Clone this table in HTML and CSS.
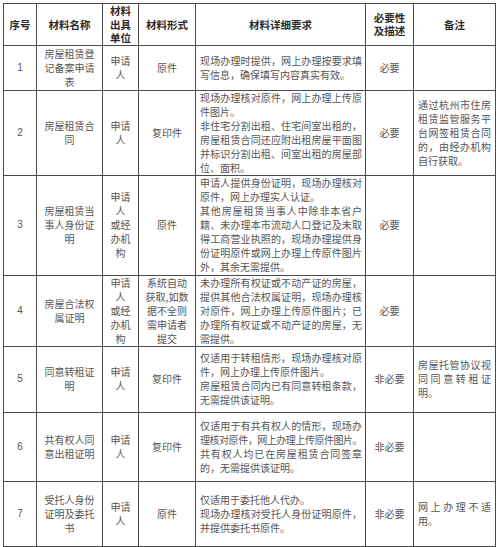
FILE: index.html
```html
<!DOCTYPE html>
<html lang="zh-CN">
<head>
<meta charset="utf-8">
<link rel="stylesheet" href="styles.css">
</head>
<body>
<table class="tbl">
  <colgroup>
    <col class="c1"><col class="c2"><col class="c3"><col class="c4"><col class="c5"><col class="c6"><col class="c7">
  </colgroup>
  <tr class="h0">
    <th>序号</th>
    <th>材料名称</th>
    <th>材料<br>出具<br>单位</th>
    <th>材料形式</th>
    <th>材料详细要求</th>
    <th>必要性<br>及描述</th>
    <th>备注</th>
  </tr>
  <tr class="h1">
    <td class="num">1</td>
    <td>房屋租赁登<br>记备案申请<br>表</td>
    <td>申请<br>人</td>
    <td>原件</td>
    <td class="txt"><span class="j">现场办理时提供，网上办理按要求填</span><span>写信息，确保填写内容真实有效。</span></td>
    <td>必要</td>
    <td class="note"></td>
  </tr>
  <tr class="h2">
    <td class="num">2</td>
    <td>房屋租赁合<br>同</td>
    <td>申请<br>人</td>
    <td>复印件</td>
    <td class="txt"><span class="j">现场办理核对原件，网上办理上传原</span><span>件图片。</span><span class="j">非住宅分割出租、住宅间室出租的，</span><span class="j">房屋租赁合同还应附出租房屋平面图</span><span class="j">并标识分割出租、间室出租的房屋部</span><span>位、面积。</span></td>
    <td>必要</td>
    <td class="note"><span class="j">通过杭州市住房</span><span class="j">租赁监管服务平</span><span class="j">台网签租赁合同</span><span class="j">的，由经办机构</span><span>自行获取。</span></td>
  </tr>
  <tr class="h3">
    <td class="num">3</td>
    <td>房屋租赁当<br>事人身份证<br>明</td>
    <td>申请<br>人<br>或经<br>办机<br>构</td>
    <td>原件</td>
    <td class="txt"><span class="j">申请人提供身份证明，现场办理核对</span><span>原件，网上办理实人认证。</span><span class="j">其他房屋租赁当事人中除非本省户</span><span class="j">籍、未办理本市流动人口登记及未取</span><span class="j">得工商营业执照的，现场办理提供身</span><span class="j">份证明原件或网上办理上传原件图片</span><span>外，其余无需提供。</span></td>
    <td>必要</td>
    <td class="note"></td>
  </tr>
  <tr class="h4">
    <td class="num">4</td>
    <td>房屋合法权<br>属证明</td>
    <td>申请<br>人<br>或经<br>办机<br>构</td>
    <td>系统自动<br>获取,如数<br>据不全则<br>需申请者<br>提交</td>
    <td class="txt"><span class="j">未办理所有权证或不动产证的房屋，</span><span class="j">提供其他合法权属证明，现场办理核</span><span class="j">对原件，网上办理上传原件图片；已</span><span class="j">办理所有权证或不动产证的房屋，无</span><span>需提供。</span></td>
    <td>必要</td>
    <td class="note"></td>
  </tr>
  <tr class="h5">
    <td class="num">5</td>
    <td>同意转租证<br>明</td>
    <td>申请<br>人</td>
    <td>复印件</td>
    <td class="txt"><span class="j">仅适用于转租情形，现场办理核对原</span><span>件，网上办理上传原件图片。</span><span class="j">房屋租赁合同内已有同意转租条款，</span><span>无需提供该证明。</span></td>
    <td>非必要</td>
    <td class="note"><span class="j">房屋托管协议视</span><span class="j">同同意转租证</span><span>明。</span></td>
  </tr>
  <tr class="h6">
    <td class="num">6</td>
    <td>共有权人同<br>意出租证明</td>
    <td>申请<br>人</td>
    <td>复印件</td>
    <td class="txt"><span class="j">仅适用于有共有权人的情形，现场办</span><span class="j tight">理核对原件，网上办理上传原件图片。</span><span class="j">共有权人均已在房屋租赁合同签章</span><span>的，无需提供该证明。</span></td>
    <td>非必要</td>
    <td class="note"></td>
  </tr>
  <tr class="h7">
    <td class="num">7</td>
    <td>受托人身份<br>证明及委托<br>书</td>
    <td>申请<br>人</td>
    <td>原件</td>
    <td class="txt"><span>仅适用于委托他人代办。</span><span class="j">现场办理核对受托人身份证明原件，</span><span>并提供委托书原件。</span></td>
    <td>非必要</td>
    <td class="note"><span class="j">网上办理不适</span><span>用。</span></td>
  </tr>
</table>
<div class="edge"><span class="tick"></span></div>
</body>
</html>
```

FILE: styles.css
```css
html, body {
  margin: 0;
  padding: 0;
  background: #fff;
}

body {
  font-family: "Noto Sans CJK SC", "Noto Sans", sans-serif;
  color: #555;
}

.tbl {
  margin: 3px 0 0 3px;
  border-collapse: collapse;
  table-layout: fixed;
  width: 492px;
}

.c1 { width: 33px; }
.c2 { width: 66px; }
.c3 { width: 36px; }
.c4 { width: 57px; }
.c5 { width: 170px; }
.c6 { width: 48px; }
.c7 { width: 82px; }

.tbl th,
.tbl td {
  border: 1px solid #4a4a4a;
  padding: 0;
  vertical-align: middle;
  text-align: center;
  font-size: 10px;
  line-height: 14px;
  font-weight: normal;
}

.tbl th {
  font-size: 10.5px;
  font-weight: bold;
  color: #2a2a2a;
  line-height: 13.5px;
}

.tbl td.num {
  font-family: "Liberation Sans", sans-serif;
  font-size: 10px;
  color: #555;
}

.tbl td.txt {
  text-align: left;
  padding: 0 3px 0 4px;
}

.tbl td.note {
  text-align: left;
  padding: 0 4px 0 4px;
}

.txt span,
.note span {
  display: block;
  white-space: nowrap;
}

.txt span.j,
.note span.j {
  text-align: justify;
  text-align-last: justify;
}

.txt span.tight {
  letter-spacing: -0.6px;
}

.h0 { height: 40px; }
.h1 { height: 45px; }
.h2 { height: 84px; }
.h3 { height: 100px; }
.h4 { height: 71px; }
.h5 { height: 66px; }
.h6 { height: 69px; }
.h7 { height: 65px; }

.edge {
  position: relative;
  margin-top: 2px;
  height: 1px;
  border-top: 1px solid #c8c8c8;
}

.tick {
  position: absolute;
  left: 236px;
  top: -3px;
  width: 1px;
  height: 5px;
  background: #c8c8c8;
}
```
